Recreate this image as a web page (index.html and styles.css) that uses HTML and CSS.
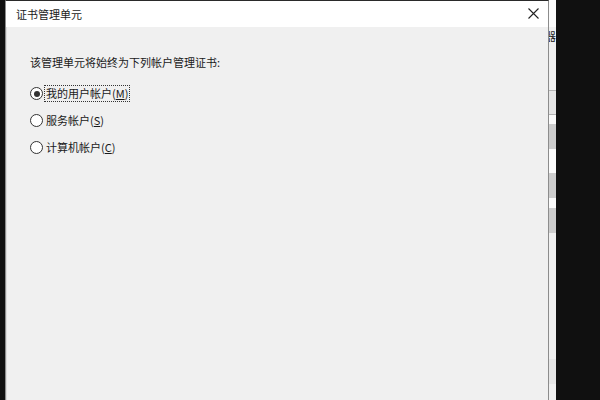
FILE: index.html
```html
<!DOCTYPE html>
<html lang="zh-CN">
<head>
    <meta charset="UTF-8">
    <title>证书管理单元</title>
    <link rel="stylesheet" href="styles.css">
</head>
<body>
    <div class="screen">
        <div class="left-edge"></div>
        <div class="dialog">
            <div class="titlebar">
                <span class="title">证书管理单元</span>
                <span class="close">
                    <svg width="11" height="11" viewBox="0 0 11 11">
                        <path d="M0.5 0.5 L10.5 10.5 M10.5 0.5 L0.5 10.5" stroke="#222" stroke-width="1.1" fill="none"/>
                    </svg>
                </span>
            </div>
            <div class="content">
                <p class="intro">该管理单元将始终为下列帐户管理证书:</p>
                <div class="options">
                    <label class="option">
                        <span class="radio checked"></span>
                        <span class="text focused">我的用户帐户(<u>M</u>)</span>
                    </label>
                    <label class="option">
                        <span class="radio"></span>
                        <span class="text">服务帐户(<u>S</u>)</span>
                    </label>
                    <label class="option">
                        <span class="radio"></span>
                        <span class="text">计算机帐户(<u>C</u>)</span>
                    </label>
                </div>
            </div>
        </div>
        <div class="side-strip">
            <div class="seg white h27"></div>
            <div class="seg h63"><span class="peek">器</span></div>
            <div class="seg light h24 lined"></div>
            <div class="seg white h10 lined"></div>
            <div class="seg grey h25"></div>
            <div class="seg white h24"></div>
            <div class="seg grey h25"></div>
            <div class="seg white h10"></div>
            <div class="seg grey h25"></div>
            <div class="seg h126"></div>
            <div class="seg light h25"></div>
            <div class="seg fill"></div>
        </div>
    </div>
</body>
</html>
```

FILE: styles.css
```css
body {
    margin: 0;
    background-color: #101010;
    font-family: "Noto Sans CJK SC", "Noto Sans", sans-serif;
    font-size: 11px;
    color: #1a1a1a;
}
.screen {
    display: flex;
    width: 600px;
    height: 400px;
    overflow: hidden;
    background-color: #101010;
}
.left-edge {
    width: 5px;
    flex-shrink: 0;
}
.dialog {
    width: 542px;
    flex-shrink: 0;
    display: flex;
    flex-direction: column;
    border-left: 1px solid #8c8c8c;
    border-right: 1px solid #8c8c8c;
    border-top: 1px solid #2a2a2a;
    box-shadow: inset 1px 0 0 #dcdcdc;
    background-color: #f0f0f0;
}
.titlebar {
    height: 26px;
    background-color: #ffffff;
    display: flex;
    align-items: center;
    justify-content: space-between;
    padding: 0 10px 0 10px;
}
.title {
    font-size: 11px;
    color: #1a1a1a;
}
.close {
    display: flex;
    width: 11px;
    height: 11px;
    margin-right: -1px;
    margin-top: -1px;
}
.content {
    padding: 27px 0 0 24px;
}
.intro {
    margin: 0;
    line-height: 16px;
}
.options {
    display: flex;
    flex-direction: column;
    gap: 10px;
    margin-top: 15px;
}
.option {
    display: flex;
    align-items: center;
    height: 17px;
}
.radio {
    width: 11px;
    height: 11px;
    border: 1px solid #333333;
    border-radius: 50%;
    background-color: #ffffff;
    margin-right: 1px;
    display: flex;
    align-items: center;
    justify-content: center;
}
.radio.checked::after {
    content: "";
    width: 6px;
    height: 6px;
    border-radius: 50%;
    background-color: #333333;
}
.text {
    padding: 0 1px;
    line-height: 15px;
    border: 1px dotted transparent;
}
.text.focused {
    border-color: #333333;
}
.side-strip {
    width: 7px;
    flex-shrink: 0;
    display: flex;
    flex-direction: column;
    background-color: #f0f0f0;
}
.seg {
    flex-shrink: 0;
    overflow: hidden;
    box-sizing: border-box;
}
.seg.white { background-color: #fbfbfb; }
.seg.light { background-color: #e6e6e6; }
.seg.grey { background-color: #cdcdcd; }
.seg.lined { border-top: 1px solid #b4b4b4; }
.seg.fill { flex: 1; }
.h10 { height: 10px; }
.h24 { height: 24px; }
.h25 { height: 25px; }
.h27 { height: 27px; }
.h63 { height: 63px; }
.h126 { height: 126px; }
.peek {
    display: block;
    margin: 3px 0 0 -4px;
    font-size: 11px;
    line-height: 12px;
    white-space: nowrap;
}
```
